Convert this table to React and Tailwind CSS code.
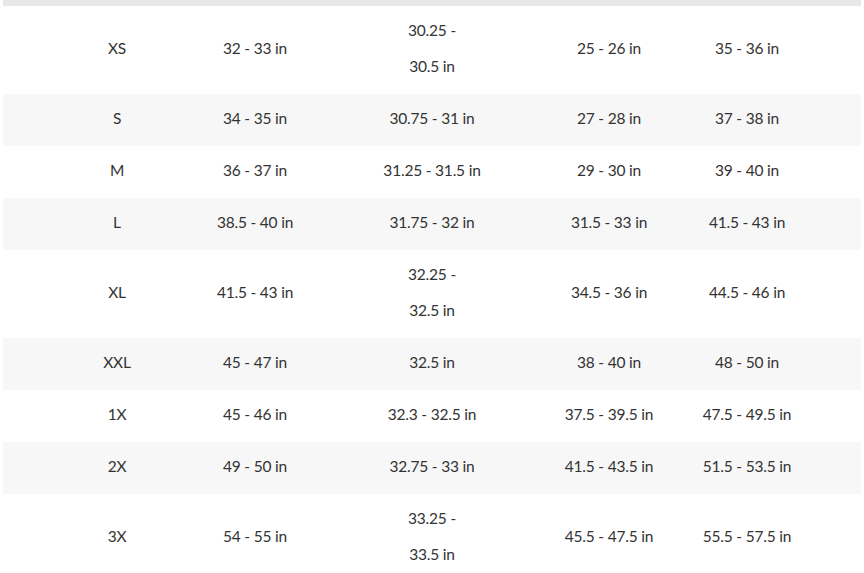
const rows = [
  ["XS", "32 - 33 in", ["30.25 -", "30.5 in"], "25 - 26 in", "35 - 36 in"],
  ["S", "34 - 35 in", ["30.75 - 31 in"], "27 - 28 in", "37 - 38 in"],
  ["M", "36 - 37 in", ["31.25 - 31.5 in"], "29 - 30 in", "39 - 40 in"],
  ["L", "38.5 - 40 in", ["31.75 - 32 in"], "31.5 - 33 in", "41.5 - 43 in"],
  ["XL", "41.5 - 43 in", ["32.25 -", "32.5 in"], "34.5 - 36 in", "44.5 - 46 in"],
  ["XXL", "45 - 47 in", ["32.5 in"], "38 - 40 in", "48 - 50 in"],
  ["1X", "45 - 46 in", ["32.3 - 32.5 in"], "37.5 - 39.5 in", "47.5 - 49.5 in"],
  ["2X", "49 - 50 in", ["32.75 - 33 in"], "41.5 - 43.5 in", "51.5 - 53.5 in"],
  ["3X", "54 - 55 in", ["33.25 -", "33.5 in"], "45.5 - 47.5 in", "55.5 - 57.5 in"],
]

function Cell({ children }) {
  return (
    <div className="flex items-center justify-center whitespace-nowrap">
      {children}
    </div>
  )
}

export default function App() {
  return (
    <div className="w-[864px] h-[573px] overflow-hidden bg-white">
      <div className="mx-[3px] text-[15.5px] leading-[36px] text-[#333] tracking-[-0.2px]" style={{ fontFamily: 'Lato, "Liberation Sans", sans-serif' }}>
        {/* header strip */}
        <div className="h-[6px] bg-[#e8e8e8]" />

        {rows.map((row, i) => (
          <div
            key={row[0]}
            className={`grid grid-cols-[228px_48px_306px_48px_1fr] pt-[6px] pb-[10px] ${i % 2 === 1 ? "bg-[#f7f7f7]" : "bg-white"}`}
          >
            <Cell>{row[0]}</Cell>
            <Cell>{row[1]}</Cell>
            <div className="flex flex-col items-center justify-center">
              {row[2].map((line) => (
                <span key={line} className="whitespace-nowrap">{line}</span>
              ))}
            </div>
            <Cell>{row[3]}</Cell>
            <Cell>{row[4]}</Cell>
          </div>
        ))}
      </div>
    </div>
  )
}
